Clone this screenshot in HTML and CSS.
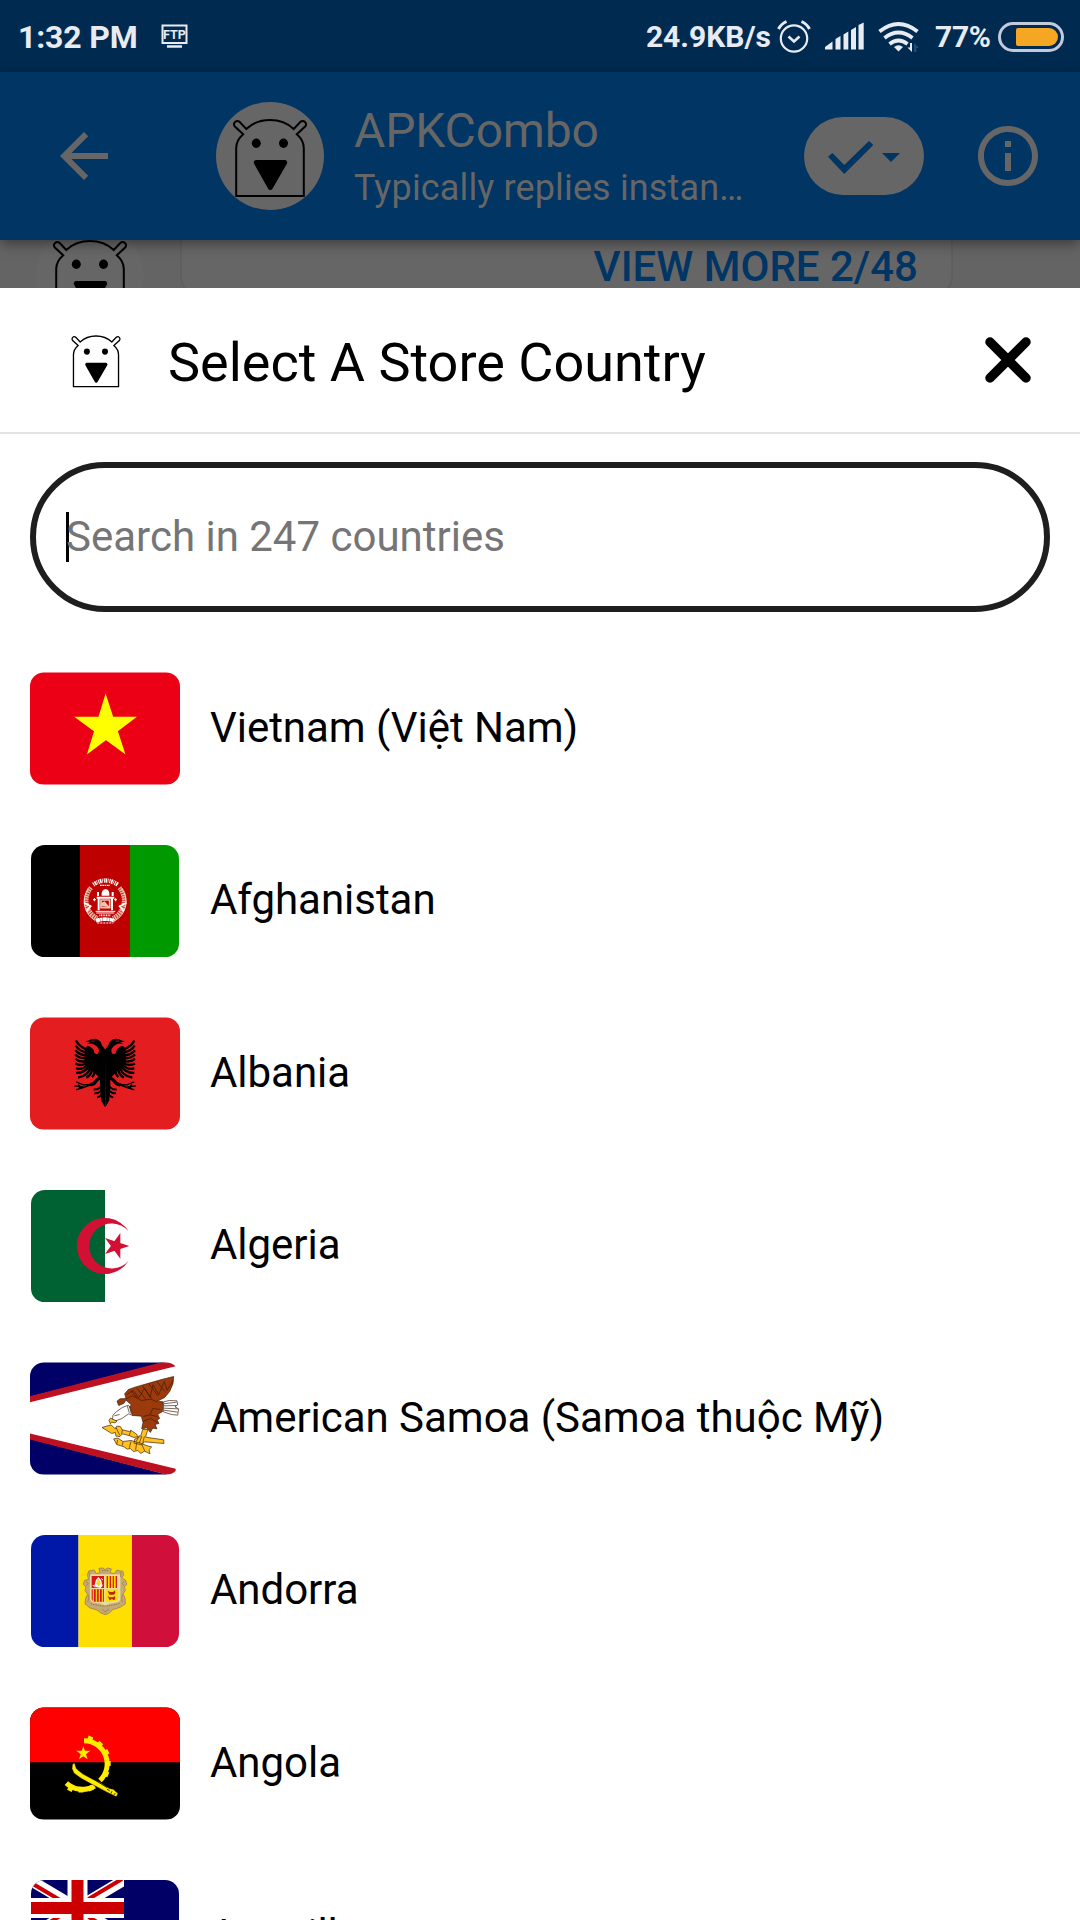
FILE: index.html
```html
<!DOCTYPE html>
<html lang="en">
<head>
<meta charset="utf-8">
<title>Select A Store Country</title>
<link rel="stylesheet" href="styles.css">
</head>
<body>
<svg class="defs" width="0" height="0" aria-hidden="true">
  <symbol id="robot" viewBox="0 0 108 108">
    <path d="M20.2 94V46C20.2 40 23.5 35.500 27.200 32.300L18.600 24.300A3.400 3.400 0 0 1 23.300 19.600L30.300 27C36 21.500 44 18 54 18S72 21.500 77.700 27L84.700 19.600A3.400 3.400 0 0 1 89.400 24.300L80.800 32.300C84.500 35.500 87.800 40 87.800 46V94Z" fill="none" stroke="#000" stroke-width="2"/>
    <ellipse cx="40.300" cy="41.300" rx="4.500" ry="4.700"/>
    <ellipse cx="67.500" cy="41.300" rx="4.500" ry="4.700"/>
    <path d="M40.300 60.500H68.700L54.300 85.500Z" stroke="#000" stroke-width="5" stroke-linejoin="round"/>
  </symbol>
</svg>

<header class="status">
  <span class="time">1:32 PM</span>
  <svg class="ftp" width="28" height="26" viewBox="0 0 28 26">
    <rect x="1.500" y="1.500" width="24" height="17.500" fill="none" stroke="#e8ecf2" stroke-width="2"/>
    <text x="13.500" y="15" text-anchor="middle">FTP</text>
    <path d="M6 22.500H21" stroke="#e8ecf2" stroke-width="2.500"/>
  </svg>
  <span class="speed">24.9KB/s</span>
  <svg class="alarm" width="34" height="34" viewBox="0 0 34 34" fill="none" stroke="#e8ecf2">
    <circle cx="17" cy="18.500" r="13.200" stroke-width="2.200"/>
    <path d="M11.500 16.500L17 21.500L22.500 16.500" stroke-width="2.600"/>
    <path d="M1.500 9Q4 4 9.500 1.500M32.500 9Q30 4 24.500 1.500" stroke-width="3"/>
  </svg>
  <svg class="signal" width="39" height="28" viewBox="0 0 39 28" fill="#e8ecf2">
    <path d="M0 27.500V25L7.500 19.500V27.500ZM10.500 27.500V17L15.500 14V27.500ZM18.500 27.500V12.500L23.300 9.500V27.500ZM26 27.500V8L31 5V27.500ZM33.500 27.500V3L38.700 .5V27.500Z"/>
  </svg>
  <svg class="wifi" width="42" height="32" viewBox="0 0 42 32" fill="none" stroke="#e8ecf2" stroke-width="3.800">
    <path d="M1.500 10.500Q20.500 -4.500 39.500 10.500M6.500 17Q20.500 6 34.500 17M11.500 23Q20.500 16 29.500 23"/>
    <path d="M16 26Q20.500 22.500 25 26L20.500 30.500Z" fill="#e8ecf2" stroke="none"/>
    <path d="M34 22V31L29.500 26.500H32V22Z" fill="#e8ecf2" stroke="none"/>
    <path d="M36 31V22L41 27H38.500V31Z" fill="#244a70" stroke="none"/>
  </svg>
  <span class="percent">77%</span>
  <span class="battery"><span class="charge"></span></span>
</header>

<div class="toolbar">
  <svg class="back" width="72" height="72" viewBox="0 0 24 24"><path d="M20 11H7.830l5.590-5.590L12 4l-8 8 8 8 1.410-1.410L7.830 13H20v-2z"/></svg>
  <div class="avatar"><svg width="108" height="108"><use href="#robot"/></svg></div>
  <div class="contact">
    <div class="name">APKCombo</div>
    <div class="reply">Typically replies instan…</div>
  </div>
  <div class="pill">
    <svg width="120" height="78" viewBox="0 0 120 78"><path d="M24 39.700L28.400 36L40.300 48L65 24L69.300 27.900L40.300 57ZM78 36H96L87 45Z"/></svg>
  </div>
  <svg class="info" width="72" height="72" viewBox="0 0 24 24"><path d="M11 7h2v2h-2zm0 4h2v6h-2zm1-9C6.480 2 2 6.480 2 12s4.480 10 10 10 10-4.480 10-10S17.520 2 12 2zm0 18c-4.410 0-8-3.590-8-8s3.590-8 8-8 8 3.590 8 8-3.590 8-8 8z"/></svg>
</div>

<div class="chat">
  <div class="chat-avatar"><svg width="108" height="108"><use href="#robot"/></svg></div>
  <div class="card">VIEW MORE 2/48</div>
</div>

<main class="sheet">
  <div class="sheet-head">
    <svg width="72" height="72"><use href="#robot"/></svg>
    <h1>Select A Store Country</h1>
    <svg class="close" width="46" height="46" viewBox="0 0 46 46"><path d="M5 5L41 41M41 5L5 41"/></svg>
  </div>
  <div class="search"><span class="caret"></span><span class="hint">Search in 247 countries</span></div>

  <ul class="countries">
    <li>
      <svg class="flag" viewBox="0 0 150 112.500">
        <path fill="#ec0015" d="M0 0H150V112.500H0Z"/>
        <path fill="#ff0" d="M75.600 21.500L95.500 82.500L44.200 44.800H107L56.900 82.500Z"/>
      </svg>
      <span>Vietnam (Việt Nam)</span>
    </li>
    <li>
      <svg class="flag inset" viewBox="0 0 150 112.500">
        <path d="M0 0H50V112.500H0Z"/>
        <path fill="#bf0000" d="M50 0H100V112.500H50Z"/>
        <path fill="#090" d="M100 0H150V112.500H100Z"/>
        <g transform="translate(-10 -10) scale(.33333)" fill="none" stroke="#fff">
          <path d="M213 158A59 59 0 0 0 232 250M298 158A59 59 0 0 1 279 250" stroke="#e8b9a0" stroke-width="14" stroke-dasharray="5 2"/>
          <path d="M206 160A66 66 0 0 0 226 257M305 160A66 66 0 0 1 285 257" stroke="#f3d9cc" stroke-width="3"/>
          <path d="M192 203L212 214M199 228L214 212M319 203L299 214M312 228L297 212" stroke-width="5"/>
          <path d="M220 149Q256 124 294 149" stroke-width="13" stroke-dasharray="3 2 5 2 2 3"/>
          <path d="M240 151H270" stroke-width="4" stroke-dasharray="5 2"/>
          <path d="M245 182V174Q247 163 257 162Q266 164 268 174V182Z" fill="#fff" stroke="none"/>
          <path d="M234 171V183M278 171V183M230 188H283M236 188V226M276 188V226" stroke-width="6"/>
          <path d="M243 195H269V218H243Z" stroke="#edc7b4" stroke-width="5"/>
          <path d="M243 204L254 199L269 217L244 213Z" fill="#edc7b4" stroke="none"/>
          <path d="M227 229H286M229 234H283" stroke-width="3"/>
          <path d="M219 194H228M223 189V199M282 194H291M287 189V199" stroke-width="3"/>
          <path d="M238 241H273" stroke-width="5" stroke-dasharray="3 2"/>
          <path d="M228 257Q256 248 284 257" stroke-width="11" stroke-dasharray="12 1 7 1"/>
          <path d="M232 264H280" stroke-width="3" stroke-dasharray="6 3"/>
        </g>
      </svg>
      <span>Afghanistan</span>
    </li>
    <li>
      <svg class="flag" viewBox="0 0 150 112.500">
        <path fill="#e41e20" d="M0 0H150V112.500H0Z"/>
        <g transform="translate(-10 -17.500) scale(.33333)" stroke="#000">
          <g id="half-eagle">
            <path stroke="none" d="M256 151L246 137Q242 124 232 119Q219 115 205 123L196 126L211 128L201 132L217 133Q233 139 237 151Q237 163 231 164Q222 164 222 154Q217 143 203 139L194 148V194L206 204L222 218L240 236L240 262L242 286L243 302L255 323Z"/>
            <path fill="none" stroke-width="7" d="M200 150Q176 140 168 123M200 159Q176 154 167 138M200 168Q177 166 166 152M200 176Q178 178 166 165M200 184Q180 190 166 178M200 190Q184 202 166 192M203 194Q188 214 168 206M207 199Q195 221 168 220M211 204Q204 230 174 234M216 210Q214 226 199 235M224 216Q224 226 216 233"/>
            <path fill="none" stroke-width="10" d="M244 232Q230 240 222 252L210 256"/>
            <path fill="none" stroke-width="4" d="M212 256L190 264L168 271M212 255L190 256L168 247M190 262L163 259M182 263L175 255M182 262L174 270"/>
            <path fill="none" stroke-width="6" d="M250 252Q238 272 221 270M250 264Q238 284 223 281M250 274Q242 294 231 293"/>
          </g>
          <use href="#half-eagle" transform="matrix(-1 0 0 1 511 0)"/>
          <path d="M214 125H224M287 125H297" stroke="#e41e20" stroke-width="2"/>
        </g>
      </svg>
      <span>Albania</span>
    </li>
    <li>
      <svg class="flag inset" viewBox="0 0 150 112.500">
        <path fill="#fff" d="M0 0H150V112.500H0Z"/>
        <path fill="#006233" d="M0 0H75V112.500H0Z"/>
        <g transform="translate(-10 -190) scale(.33333)" fill="#d21034">
          <path d="M326 694A84 84 0 1 0 326 782A67.500 67.500 0 1 1 326 694Z"/>
          <path d="M328 738L255 762L301 699V776L255 714Z"/>
        </g>
      </svg>
      <span>Algeria</span>
    </li>
    <li>
      <svg class="flag" viewBox="0 0 150 112.500">
        <path fill="#fff" d="M0 0H150V112.500H0Z"/>
        <g transform="translate(-10 -12.500) scale(.33333)" stroke-linejoin="round">
          <path fill="#006" d="M30 37H440L30 142ZM30 268L440 375H30Z"/>
          <path fill="#bd1021" d="M30 140L430 37H467V50L30 158ZM30 252L467 358V375H438L30 270Z"/>
          <g stroke="#3a1a08" stroke-width="2">
            <path fill="#9c3a0c" d="M325 176L334 166L318 152L311 162L296 168L291 155L300 148L318 147L314 133L325 120L345 113L390 100L425 90L461 81L459 103L449 126L434 144L412 155L429 157L427 187L413 194L419 207L411 211L417 222L405 225L411 238L398 236L391 249L381 235L365 238L369 219L364 200L338 198Z"/>
            <path fill="none" d="M320 135L340 123L356 145L374 116L390 144L399 106L416 135L433 96L441 122L460 92M318 148L338 139L365 153L393 149L412 158M333 123L352 147M350 115L378 150M367 109L395 147M387 103L414 139M411 96L434 126M370 201L390 196L412 201M370 215L392 207L411 219M391 195L398 177L421 180"/>
            <path fill="#fff" d="M431 157L448 153L471 154L473 166L465 172L476 178L473 197L454 195L430 187ZM338 198L326 193L306 207L287 214L277 211L279 197L290 186L307 174L325 167L331 176L334 186Z"/>
            <path fill="none" d="M431 163L470 158M431 169L470 168M431 176L474 178M431 182L473 188M322 170L328 190M329 172L334 194M283 199L299 195"/>
            <path fill="#ffc221" d="M278 209L291 215L285 220L275 218L271 223L267 212L271 206ZM368 240H384L379 254L377 263L431 271L432 282L373 277L365 286L342 281L344 269L362 260ZM246 234L273 226L286 238L290 230L301 231L307 241L328 246L332 242L350 254L353 262L341 264L327 258L307 253L300 261L288 260L286 249L275 252ZM281 268L294 266L309 276L333 273L361 281L382 289L395 292L387 301L390 313L374 305L362 312L354 303L340 306L331 297L322 299L312 292L290 285Z"/>
            <path fill="none" d="M288 234L299 257M307 241L305 253M332 243L328 258M358 257L349 276M365 260L358 281M373 261L368 282M293 271L290 284M309 277L307 288M333 276L328 295M350 279L347 301M365 284L374 304"/>
          </g>
        </g>
      </svg>
      <span>American Samoa (Samoa thuộc Mỹ)</span>
    </li>
    <li>
      <svg class="flag inset" viewBox="0 0 150 112.500">
        <path fill="#0018a8" d="M0 0H48.500V112.500H0Z"/>
        <path fill="#fedf00" d="M48.500 0H102V112.500H48.500Z"/>
        <path fill="#d0103a" d="M102 0H150V112.500H102Z"/>
        <g transform="translate(-10 -15) scale(.33333)">
          <path fill="#c6aa73" stroke="#aa8c4e" stroke-width="3" d="M237 145L249 144L255 149L263 144L274 147L270 158L283 161L290 151L309 154L311 166L305 173L316 180L321 193L313 199L316 211L309 222L315 234L316 252L300 262L278 269L267 280L256 284L243 279L231 270L210 264L195 251L197 235L203 223L195 211L198 201L190 193L194 181L206 178L202 166L206 153L223 150L228 161L240 158Z"/>
          <path fill="#e9d9a5" d="M210 163H301V238Q300 248 283 249Q267 250 256 257Q243 250 228 249Q211 248 210 237Z"/>
          <path fill="#d8171d" d="M215 168H252V204H215ZM215 208H252V245H225Q216 244 215 236Z"/>
          <path fill="#fedf00" d="M257 168H293V204H257ZM257 208H295V235Q293 244 280 245H257Z"/>
          <path stroke="#d8171d" stroke-width="4" d="M262 168V204M271 168V204M280 168V204M289 168V204"/>
          <path stroke="#fedf00" stroke-width="3.500" d="M220 208V244M229 208V245M238 208V245M247 208V245"/>
          <path fill="#fff" d="M223 198L228 180L235 171L243 180L248 197L242 204L229 202Z"/>
          <path fill="#fedf00" stroke="#e6a61a" stroke-width="1" d="M229 191L235 176L242 190L236 199Z"/>
          <path fill="none" stroke="#fff" stroke-width="3" d="M218 195L225 202M243 175L249 180"/>
          <path fill="#b9251c" d="M263 212L270 216H279L285 211L286 219L282 224H268ZM263 229L270 232H279L285 228L286 236L282 241L276 237L269 241Z"/>
          <path fill="none" stroke="#705a2c" stroke-width="2" stroke-dasharray="4 3" d="M212 251Q240 260 256 258Q276 257 299 250M246 152H266"/>
          <path fill="none" stroke="#917642" stroke-width="2" d="M209 157V171M302 157V171M199 184Q208 190 201 196M312 184Q303 190 311 197M204 224Q210 234 203 246M308 224Q302 234 307 247M247 267L255 276L267 267"/>
        </g>
      </svg>
      <span>Andorra</span>
    </li>
    <li>
      <svg class="flag" viewBox="0 0 150 112.500">
        <path d="M0 0H150V112.500H0Z"/>
        <path fill="red" d="M0 0H150V55.300H0Z"/>
        <g transform="translate(-30 -17.500) scale(.33333)" fill="#ffec00">
          <path d="M250 170L255 184H271L258 194L263 209L250 200L237 209L242 194L229 184H245Z"/>
          <path fill="none" stroke="#ffec00" stroke-width="15" d="M252 154A69 69 0 0 1 300 273M284 290A72 72 0 0 1 199 281"/>
          <path fill="none" stroke="#ffec00" stroke-width="15" d="M268 154L273 141M293 170L304 159M311 192L325 185M317 222H332M311 250L325 256M269 289L275 303M243 292V309M217 286L208 304"/>
          <path stroke="#000" stroke-width="1.500" d="M223 219L229 237L248 253L276 268L301 279L328 297L340 299L354 312L349 322L335 315L321 308L277 285L244 267L222 251L216 238L217 226Z"/>
          <path fill="none" stroke="#000" stroke-width="2.500" d="M233 240L321 294M321 299L329 304M336 305L333 312M346 311L342 316"/>
        </g>
      </svg>
      <span>Angola</span>
    </li>
    <li>
      <svg class="flag inset" viewBox="0 0 150 112.500">
        <path fill="#006" d="M0 0H150V112.500H0Z"/>
        <svg x="0" y="0" width="94" height="56" viewBox="0 0 94 56">
          <path stroke="#fff" stroke-width="11" d="M0 0L94 56M94 0L0 56"/>
          <path stroke="#c00" stroke-width="4" d="M3 4L94 58M92 -1L0 54"/>
          <path stroke="#fff" stroke-width="20" d="M47.500 0V56M0 28H94"/>
          <path stroke="#c00" stroke-width="12" d="M47.500 0V56M0 28H94"/>
        </svg>
      </svg>
      <span>Anguilla</span>
    </li>
  </ul>
</main>
</body>
</html>
```
FILE: styles.css
```css
* { box-sizing: border-box; }

body {
  margin: 0;
  width: 1080px;
  height: 1920px;
  overflow: hidden;
  display: flex;
  flex-direction: column;
  font-family: Roboto, "Noto Sans", sans-serif;
  background: #fff;
}

svg { flex: none; display: block; }
.defs { position: absolute; }

/* Status bar */
.status {
  height: 72px;
  flex: none;
  display: flex;
  align-items: flex-start;
  padding: 0 16px 0 18px;
  background: #002a50;
  color: #e8ecf2;
  font-weight: 700;
  line-height: 74px;
  white-space: nowrap;
}
.time { width: 143px; font-size: 32px; letter-spacing: -.15px; }
.ftp { margin-top: 24px; }
.ftp text { font: 700 12.500px Roboto, sans-serif; fill: #e8ecf2; }
.speed { margin-left: auto; font-size: 30px; }
.alarm { margin: 20px 0 0 6px; }
.signal { margin: 22px 0 0 14px; }
.wifi { margin: 21px 0 0 14px; }
.percent { margin-left: 15px; width: 63px; font-size: 30px; letter-spacing: -.3px; }
.battery {
  width: 66px;
  height: 30px;
  margin-top: 22px;
  display: flex;
  justify-content: flex-end;
  padding: 3px;
  border: 3px solid #c3cadb;
  border-radius: 15px;
}
.charge { width: 42px; background: #f5a623; border-radius: 2px 9px 9px 2px; }

/* Dimmed conversation behind the sheet */
.toolbar {
  height: 168px;
  flex: none;
  position: relative;
  z-index: 1;
  display: flex;
  align-items: center;
  padding: 0 36px 0 48px;
  background: #003564;
  color: #666;
  box-shadow: 0 4px 12px rgba(0, 0, 0, .4);
}
.back, .info { fill: #666; }
.avatar { width: 108px; height: 108px; margin-left: 96px; border-radius: 50%; background: #666; }
.contact { width: 449px; margin-left: 30px; padding-top: 9px; white-space: nowrap; }
.name { font-size: 48px; line-height: 56px; letter-spacing: -.15px; }
.reply { font-size: 36px; line-height: 59px; letter-spacing: .14px; }
.pill { width: 120px; height: 78px; margin-left: 1px; border-radius: 39px; background: #666; }
.pill path { fill: #003564; }
.info { margin-left: auto; }

.chat {
  height: 48px;
  flex: none;
  display: flex;
  align-items: flex-start;
  overflow: hidden;
  background: #646464;
}
.chat-avatar { margin: -17px 0 0 36px; border-radius: 50%; background: #666; }
.card {
  width: 773px;
  height: 64px;
  margin: -6px 0 0 36px;
  padding-right: 33px;
  border: 2px solid #5f5f5f;
  border-radius: 0 0 22px 22px;
  background: #666;
  color: #003564;
  font-size: 42px;
  font-weight: 500;
  line-height: 62px;
  text-align: right;
}

/* Country picker */
.sheet { flex: 1; min-height: 0; background: #fff; color: #000; }
.sheet-head {
  height: 146px;
  display: flex;
  align-items: center;
  padding: 0 49px 0 60px;
  border-bottom: 2px solid #e3e3e3;
}
h1 { margin: 0 0 0 36px; padding-top: 6px; font-size: 54px; font-weight: 400; line-height: 64px; }
.close { margin-left: auto; fill: none; stroke: #000; stroke-width: 9.500; stroke-linecap: round; }
.search {
  height: 150px;
  margin: 28px 30px 0;
  display: flex;
  align-items: center;
  padding-left: 30px;
  border: 6px solid #1e1e1e;
  border-radius: 75px;
  color: #757575;
  font-size: 42px;
}
.caret { width: 3px; height: 50px; margin-right: -3px; background: #000; }
.hint { padding-bottom: 2px; }

.countries { margin: 0; padding: 30.400px 30px 0; list-style: none; }
.countries li {
  height: 172.500px;
  display: flex;
  align-items: center;
  gap: 30px;
  font-size: 42px;
  line-height: 50px;
  letter-spacing: -.03px;
  white-space: nowrap;
}
.countries span { padding-bottom: 2px; }
.flag { width: 150px; height: 112.500px; clip-path: inset(0 round 14px); }
.flag.inset { clip-path: inset(0 1px round 14px); }
```
